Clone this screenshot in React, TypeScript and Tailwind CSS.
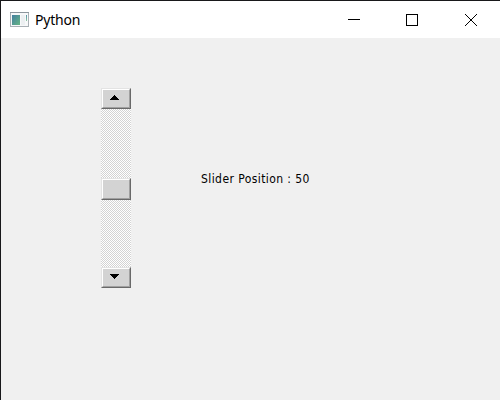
import type { ReactNode } from 'react';

function Bevel({ className, children }: { className: string; children?: ReactNode }) {
  return (
    <div className={`border border-t-[#e3e3e3] border-l-[#e3e3e3] border-r-[#696969] border-b-[#696969] ${className}`}>
      <div className="flex h-full justify-center border border-t-white border-l-white border-r-[#a0a0a0] border-b-[#a0a0a0] bg-[#d3d3d3]">
        {children}
      </div>
    </div>
  );
}

function TitleBar() {
  return (
    <header className="flex h-[37px] items-center bg-white">
      <svg className="ml-[9px] h-4 w-[19px] shrink-0" viewBox="0 0 19 16" shapeRendering="crispEdges">
        <defs>
          <linearGradient id="screen" x1="0" y1="0" x2="1" y2="1">
            <stop offset="0" stopColor="#447fa0" />
            <stop offset="1" stopColor="#65b584" />
          </linearGradient>
          <linearGradient id="strip" x1="0" y1="0" x2="0" y2="1">
            <stop offset="0" stopColor="#5590a8" />
            <stop offset="1" stopColor="#8cc8a0" />
          </linearGradient>
        </defs>
        <rect x="0.5" y="0.5" width="18" height="14" fill="#f7f8f9" stroke="#a9b0b5" />
        <rect x="0" y="0" width="19" height="1" fill="#8d969d" />
        <rect x="2" y="3" width="8" height="10" fill="url(#screen)" />
        <rect x="11" y="3" width="4" height="10" fill="#eceff1" />
        <rect x="16" y="3" width="1" height="6" fill="url(#strip)" />
      </svg>
      <span className="ml-[6px] grow whitespace-nowrap font-['Noto_Sans',sans-serif] text-[14px] leading-5 tracking-[-0.2px] text-black">Python</span>
      <div className="flex w-[174px] shrink-0 items-center">
        <svg className="h-9 w-[58px]" viewBox="0 0 58 36" shapeRendering="crispEdges">
          <rect x="22" y="17" width="12" height="1" />
        </svg>
        <svg className="h-9 w-[58px]" viewBox="0 0 58 36" shapeRendering="crispEdges">
          <rect x="22.5" y="12.5" width="11" height="11" fill="none" stroke="black" />
        </svg>
        <svg className="h-9 w-[58px]" viewBox="0 0 58 36">
          <path d="M23 12l12 12M35 12l-12 12" stroke="black" strokeWidth="1" />
        </svg>
      </div>
    </header>
  );
}

function ScrollBar() {
  return (
    <div className="flex h-[200px] w-[30px] shrink-0 flex-col bg-[repeating-conic-gradient(#d3d3d3_0_25%,#ffffff_0_50%)] bg-[length:2px_2px]">
      <Bevel className="h-[21px]">
        <svg className="mt-[5px] mr-[3px] h-[5px] w-[9px]" viewBox="0 0 9 5" shapeRendering="crispEdges">
          <path d="M4 0h1v1h1v1h1v1h1v1h1v1H0V4h1V3h1V2h1V1h1z" />
        </svg>
      </Bevel>
      <Bevel className="mt-[69px] h-[22px]" />
      <Bevel className="mt-auto h-[21px]">
        <svg className="mt-[5px] mr-[3px] h-[5px] w-[9px]" viewBox="0 0 9 5" shapeRendering="crispEdges">
          <path d="M0 0h9v1H8v1H7v1H6v1H5v1H4V4H3V3H2V2H1V1H0z" />
        </svg>
      </Bevel>
    </div>
  );
}

export default function App() {
  return (
    <div className="h-[400px] w-[500px] overflow-hidden border-t border-l border-[#18181a] bg-[#f0f0f0]">
      <TitleBar />
      <main className="flex items-start pt-[50px] pl-[100px]">
        <ScrollBar />
        <p className="mt-[83px] ml-[70px] whitespace-nowrap font-['DejaVu_Sans_Condensed','DejaVu_Sans',sans-serif] text-[12px] leading-4 tracking-[0.42px] text-black">
          Slider Position : 50
        </p>
      </main>
    </div>
  );
}
